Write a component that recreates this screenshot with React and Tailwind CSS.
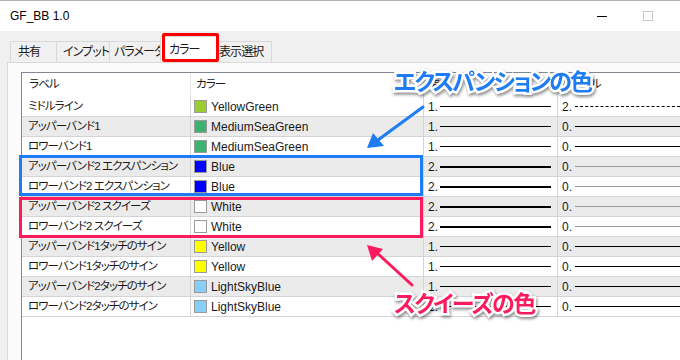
import React from 'react';

const FONT = "font-['Liberation_Sans','Noto_Sans_CJK_JP',sans-serif] [font-feature-settings:'palt']";
const JP = 'text-[11.5px] tracking-[-0.9px] whitespace-nowrap';

const rows = [
  { label: 'ミドルライン', color: '#9acd32', name: 'YellowGreen', w: '1.', thick: false, s: '2.', line: 'dash' },
  { label: 'アッパーバンド1', color: '#3cb371', name: 'MediumSeaGreen', w: '1.', thick: false, s: '0.', line: 'black' },
  { label: 'ロワーバンド1', color: '#3cb371', name: 'MediumSeaGreen', w: '1.', thick: false, s: '0.', line: 'black' },
  { label: 'アッパーバンド2 エクスパンション', color: '#0000ff', name: 'Blue', w: '2.', thick: true, s: '0.', line: 'gray' },
  { label: 'ロワーバンド2 エクスパンション', color: '#0000ff', name: 'Blue', w: '2.', thick: true, s: '0.', line: 'gray' },
  { label: 'アッパーバンド2 スクイーズ', color: '#ffffff', name: 'White', w: '2.', thick: true, s: '0.', line: 'gray' },
  { label: 'ロワーバンド2 スクイーズ', color: '#ffffff', name: 'White', w: '2.', thick: true, s: '0.', line: 'gray' },
  { label: 'アッパーバンド1タッチのサイン', color: '#ffff00', name: 'Yellow', w: '1.', thick: false, s: '0.', line: 'black' },
  { label: 'ロワーバンド1タッチのサイン', color: '#ffff00', name: 'Yellow', w: '1.', thick: false, s: '0.', line: 'black' },
  { label: 'アッパーバンド2タッチのサイン', color: '#87cefa', name: 'LightSkyBlue', w: '1.', thick: false, s: '0.', line: 'black' },
  { label: 'ロワーバンド2タッチのサイン', color: '#87cefa', name: 'LightSkyBlue', w: '1.', thick: false, s: '0.', line: 'black' },
];

const tabs = ['共有', 'インプット', 'パラメータ', 'カラー', '表示選択'];
const tabWidths = ['w-[47px]', 'w-[54px]', 'w-[52px]', 'w-[58px]', 'w-[55px]'];
const tabPads = ['pl-[7px]', 'pl-[6px]', 'pl-[4px]', 'pl-[8px]', 'pl-[1px]'];

function StyleLine({ line }) {
  if (line === 'dash') return <div className="flex-1 border-t border-dashed border-black" />;
  if (line === 'gray') return <div className="flex-1 h-px bg-[#9a9a9a]" />;
  return <div className="flex-1 h-px bg-black" />;
}

function Row({ r, i }) {
  const bg = i % 2 === 1 ? 'bg-[#ebebeb]' : 'bg-white';
  return (
    <div className={`flex h-[20px] border-b border-[#d4d4d4] ${bg}`}>
      <div className={`w-[169px] shrink-0 pl-[6px] flex items-center border-r border-[#d4d4d4] text-[#1a1a1a] ${JP}`}>
        {r.label}
      </div>
      <div className="w-[233px] shrink-0 pl-[3px] flex items-center gap-[4px] border-r border-[#d4d4d4] text-[12px] text-[#1a1a1a]">
        <span className="w-[13px] h-[13px] border border-[#9a9a9a]" style={{ backgroundColor: r.color }} />
        {r.name}
      </div>
      <div className="w-[134px] shrink-0 pl-[4px] pr-[6px] flex items-center gap-[3px] border-r border-[#d4d4d4] text-[12px] text-[#1a1a1a]">
        <span className="w-[9px]">{r.w}</span>
        <div className={`flex-1 bg-black ${r.thick ? 'h-[2px]' : 'h-px'}`} />
      </div>
      <div className="flex-1 pl-[4px] flex items-center gap-[3px] text-[12px] text-[#1a1a1a]">
        <span className="w-[10px]">{r.s}</span>
        <StyleLine line={r.line} />
      </div>
    </div>
  );
}

const outline = "[-webkit-text-stroke:5px_white] [paint-order:stroke_fill] drop-shadow-[1px_2px_1.5px_rgba(0,0,0,0.45)]";

export default function App() {
  return (
    <div className={`relative w-[680px] h-[360px] overflow-hidden bg-white ${FONT}`}>
      {/* title bar */}
      <div className="h-[31px] border-t border-[#b4b4b4] flex items-center justify-between pl-[10px]">
        <span className="text-[12px] text-black">GF_BB 1.0</span>
        <div className="flex items-center h-full">
          <div className="w-[46px] h-full flex items-center justify-center">
            <div className="w-[10px] h-px bg-black" />
          </div>
          <div className="w-[46px] h-full flex items-center justify-center mr-[9px]">
            <div className="w-[10px] h-[10px] border border-[#c8c8c8]" />
          </div>
        </div>
      </div>

      {/* tab strip */}
      <div className="h-[31px] bg-[#f0f0f0] flex items-end pl-[10px]">
        {tabs.map((t, i) => (
          <div
            key={t}
            className={`${tabWidths[i]} ${tabPads[i]} ${i === 3 ? 'h-[26px] bg-white' : 'h-[21px] bg-[#f0f0f0]'} border border-b-0 border-[#d9d9d9] -ml-px first:ml-0 flex items-center text-[#1a1a1a] ${JP} text-[12px]`}
          >
            {t}
          </div>
        ))}
      </div>

      {/* body */}
      <div className="flex h-[298px] bg-[#f0f0f0]">
        <div className="w-[7px]" />
        <div className="flex-1 border-l border-t border-[#d9d9d9] bg-[#fbfbfb] pl-[13px] pt-[9px]">
          <div className="h-full border-l border-t border-[#828790] bg-white">
            <div className={`flex h-[24px] text-[#1a1a1a] ${JP}`}>
              <div className="w-[169px] shrink-0 pl-[7px] flex items-center border-r border-[#e5e5e5]">ラベル</div>
              <div className="w-[233px] shrink-0 pl-[5px] flex items-center border-r border-[#e5e5e5]">カラー</div>
              <div className="w-[134px] shrink-0 pl-[5px] flex items-center border-r border-[#e5e5e5]">幅</div>
              <div className="flex-1 pl-[5px] flex items-center">スタイル</div>
            </div>
            {rows.map((r, i) => (
              <Row key={i} r={r} i={i} />
            ))}
          </div>
        </div>
      </div>

      {/* annotations */}
      <div className="absolute left-[162px] top-[33px] w-[57px] h-[29px] border-[3px] border-[#ff0000] rounded-[2px]" />
      <div className="absolute left-[19px] top-[155px] w-[404px] h-[41px] border-[3px] border-[#1e7cf5]" />
      <div className="absolute left-[19px] top-[197px] w-[404px] h-[41px] border-[3px] border-[#fc1b5d]" />

      <svg className="absolute left-0 top-0" width="680" height="360">
        <line x1="423" y1="107" x2="378" y2="140" stroke="#1e7cf5" strokeWidth="3" strokeLinecap="round" />
        <polygon points="367,148 373,133 384,146" fill="#1e7cf5" />
        <line x1="412" y1="285" x2="377" y2="253" stroke="#fc1b5d" strokeWidth="3" strokeLinecap="round" />
        <polygon points="367,245 383,249 372,261" fill="#fc1b5d" />
      </svg>

      <div className={`absolute left-[394px] top-[71px] text-[23px] font-bold text-[#1e7cf5] leading-none tracking-[-1.8px] ${outline}`}>
        エクスパンションの色
      </div>
      <div className={`absolute left-[394px] top-[293px] text-[23px] font-bold text-[#fc1b5d] leading-none tracking-[-1.6px] ${outline}`}>
        スクイーズの色
      </div>
    </div>
  );
}
